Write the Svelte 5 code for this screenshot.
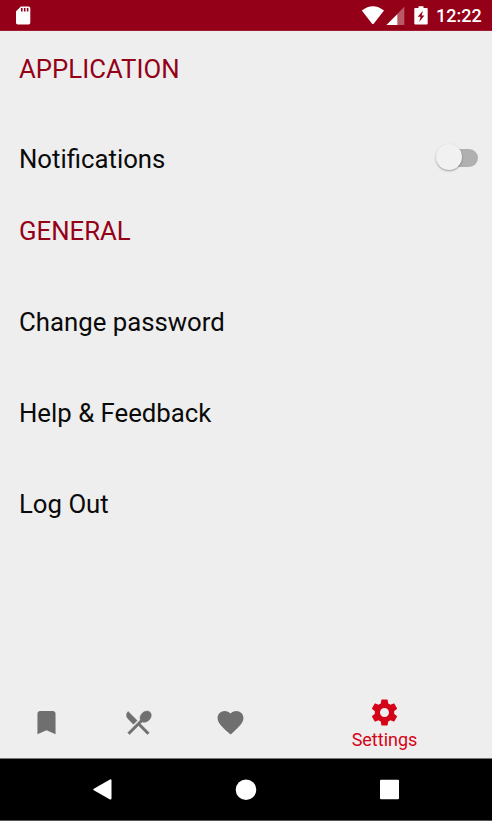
<script>
  const general = ['Change password', 'Help & Feedback', 'Log Out'];
  const tabs = [
    { name: 'Saved', edge: 0, d: 'M17 3H7c-1.1 0-2 .9-2 2v16l7-3 7 3V5c0-1.1-.9-2-2-2z' },
    { name: 'Recipes', edge: 0.4, d: 'M8.1 13.34l2.83-2.83L3.91 3.5a4.008 4.008 0 0 0 0 5.66l4.19 4.18zm6.78-1.81c1.53.71 3.68.21 5.27-1.38 1.91-1.91 2.28-4.65.81-6.12-1.46-1.46-4.2-1.1-6.12.81-1.59 1.59-2.09 3.74-1.38 5.27L3.7 19.87l1.41 1.41L12 14.41l6.88 6.88 1.41-1.41L13.41 13l1.47-1.47z' },
    { name: 'Favourites', edge: 0, d: 'M12 21.35l-1.45-1.32C5.4 15.36 2 12.28 2 8.5 2 5.42 4.42 3 7.5 3c1.74 0 3.41.81 4.5 2.09C13.09 3.81 14.76 3 16.5 3 19.58 3 22 5.42 22 8.5c0 3.78-3.4 6.86-8.55 11.54L12 21.35z' }
  ];
</script>

<div class="screen">
  <header class="status">
    <svg class="sd" width="16" height="19" viewBox="0 0 16 19"><path fill="#fff" fill-rule="evenodd" d="M5.900.4H13.600q1.700 0 1.700 1.600v14.800q0 1.700-1.700 1.700H2.700Q1 18.500 1 16.800V5.300zM6 2v3.600h1.600V2zm2.900 0v3.600h1.600V2zm2.900 0v3.600h1.600V2z" /></svg>
    <svg class="signals" width="68" height="21" viewBox="0 0 68 21">
      <path fill="#fff" d="M.8 4.600Q11.900-4.200 23 4.600L12.900 17.500Q11.900 18.700 10.900 17.500z" />
      <path fill="#fff" fill-opacity=".35" d="M43.300.8V18.900H25.500z" />
      <path fill="#fff" d="M36.300 8.200V18.900H25.500z" />
      <path fill="#fff" fill-rule="evenodd" d="M57.500.2h5v1.900h3.300q.9 0 .9.900v14.600q0 .9-.9.900H54.200q-.9 0-.9-.9V3q0-.9.900-.9h3.300zM62 4.800l-5.300 6h2.900l-1.400 5.200 5.200-6.500h-2.800z" />
    </svg>
    <span class="time">12:22</span>
  </header>

  <main>
    <h2 class="first">APPLICATION</h2>
    <div class="row">
      <span>Notifications</span>
      <span class="switch"><i class="track"></i><i class="thumb"></i></span>
    </div>
    <h2>GENERAL</h2>
    {#each general as item}
      <div class="row">{item}</div>
    {/each}
  </main>

  <nav class="tabs">
    {#each tabs as tab}
      <div class="tab" role="button" tabindex="-1" aria-label={tab.name}>
        <svg width="31" height="31" viewBox="0 0 24 24"><path fill="#6f6f6f" stroke="#6f6f6f" stroke-width={tab.edge} d={tab.d} /></svg>
      </div>
    {/each}
    <div class="tab active">
      <svg width="31" height="31" viewBox="0 0 24 24"><path fill="#d40418" d="M19.430 12.980c.040-.320.070-.640.070-.980s-.030-.660-.070-.980l2.110-1.650c.190-.150.240-.420.120-.640l-2-3.460c-.120-.220-.390-.300-.610-.220l-2.490 1c-.520-.400-1.080-.730-1.690-.980l-.380-2.650C14.460 2.180 14.250 2 14 2h-4c-.250 0-.460.180-.490.420l-.380 2.650c-.610.250-1.170.590-1.690.980l-2.490-1c-.230-.090-.490 0-.610.220l-2 3.460c-.130.220-.070.490.120.640l2.110 1.650c-.040.320-.070.650-.070.980s.030.660.070.980l-2.110 1.650c-.190.150-.240.420-.120.640l2 3.460c.120.220.390.300.610.220l2.490-1c.520.400 1.080.730 1.690.980l.380 2.650c.030.240.240.420.490.420h4c.250 0 .460-.180.490-.420l.380-2.650c.610-.250 1.170-.590 1.690-.980l2.490 1c.230.090.490 0 .610-.220l2-3.460c.120-.220.070-.490-.120-.640l-2.110-1.650zM12 15.500c-1.930 0-3.500-1.570-3.500-3.500s1.570-3.500 3.500-3.500 3.500 1.570 3.500 3.500-1.570 3.500-3.500 3.500z" /></svg>
      <span>Settings</span>
    </div>
  </nav>

  <footer class="system">
    <svg width="144" height="24" viewBox="0 0 144 24"><path fill="#fff" stroke="#fff" stroke-width="2" stroke-linejoin="round" d="M110.500 2.300v18.300L94.300 11.500z" /></svg>
    <svg width="204" height="24" viewBox="0 0 204 24"><circle cx="102" cy="11.700" r="10.300" fill="#fff" /></svg>
    <svg width="144" height="24" viewBox="0 0 144 24"><rect x="32" y="1.700" width="19" height="19.500" rx="1" fill="#fff" /></svg>
  </footer>
</div>

<style>
  :global(body) { margin: 0; }
  .screen {
    width: 492px;
    height: 821px;
    display: flex;
    flex-direction: column;
    overflow: hidden;
    background: #eee;
    color: #0a0a0a;
    font-family: Roboto, sans-serif;
  }
  svg { display: block; flex: none; }
  .status {
    height: 31px;
    flex: none;
    box-sizing: border-box;
    display: flex;
    align-items: flex-start;
    padding: 6px 11px 0 15px;
    background: #940018;
    border-bottom: 1px solid #a01b30;
    color: #fff;
  }
  .signals { margin-left: auto; }
  .time { margin-left: 7px; font-size: 18px; line-height: 20px; font-weight: 500; width: 45px; white-space: nowrap; }
  main { flex: 1; font-size: 25.75px; }
  h2 {
    box-sizing: border-box;
    height: 72px;
    margin: 0;
    padding: 12px 0 0 19px;
    font-size: 25.75px;
    line-height: 31px;
    font-weight: 400;
    color: #940018;
  }
  h2.first { height: 82px; padding-top: 23px; }
  .row {
    box-sizing: border-box;
    height: 91px;
    padding: 0 14px 0 19px;
    display: flex;
    align-items: center;
    justify-content: space-between;
  }
  .switch { display: flex; align-items: center; width: 42px; height: 28px; margin-bottom: 2px; position: relative; }
  .track { width: 36px; height: 18px; margin-left: auto; border-radius: 9px; background: #b0b0b0; }
  .thumb {
    position: absolute;
    left: 0;
    top: 0;
    width: 26px;
    height: 26px;
    border-radius: 50%;
    background: #f1f1f1;
    box-shadow: 0 1px 2px rgba(0, 0, 0, .35);
  }
  .tabs { height: 71px; flex: none; display: flex; }
  .tab { width: 92px; display: flex; flex-direction: column; align-items: center; justify-content: center; }
  .active { flex: 1; justify-content: flex-start; padding-top: 10px; color: #d40418; font-size: 18px; line-height: 21px; }
  .active span { margin-top: 1px; padding-left: 1px; }
  .system {
    height: 63px;
    flex: none;
    box-sizing: border-box;
    display: flex;
    align-items: center;
    background: #000;
    border-top: 1px solid #777;
    border-bottom: 1px solid #555;
  }
</style>
